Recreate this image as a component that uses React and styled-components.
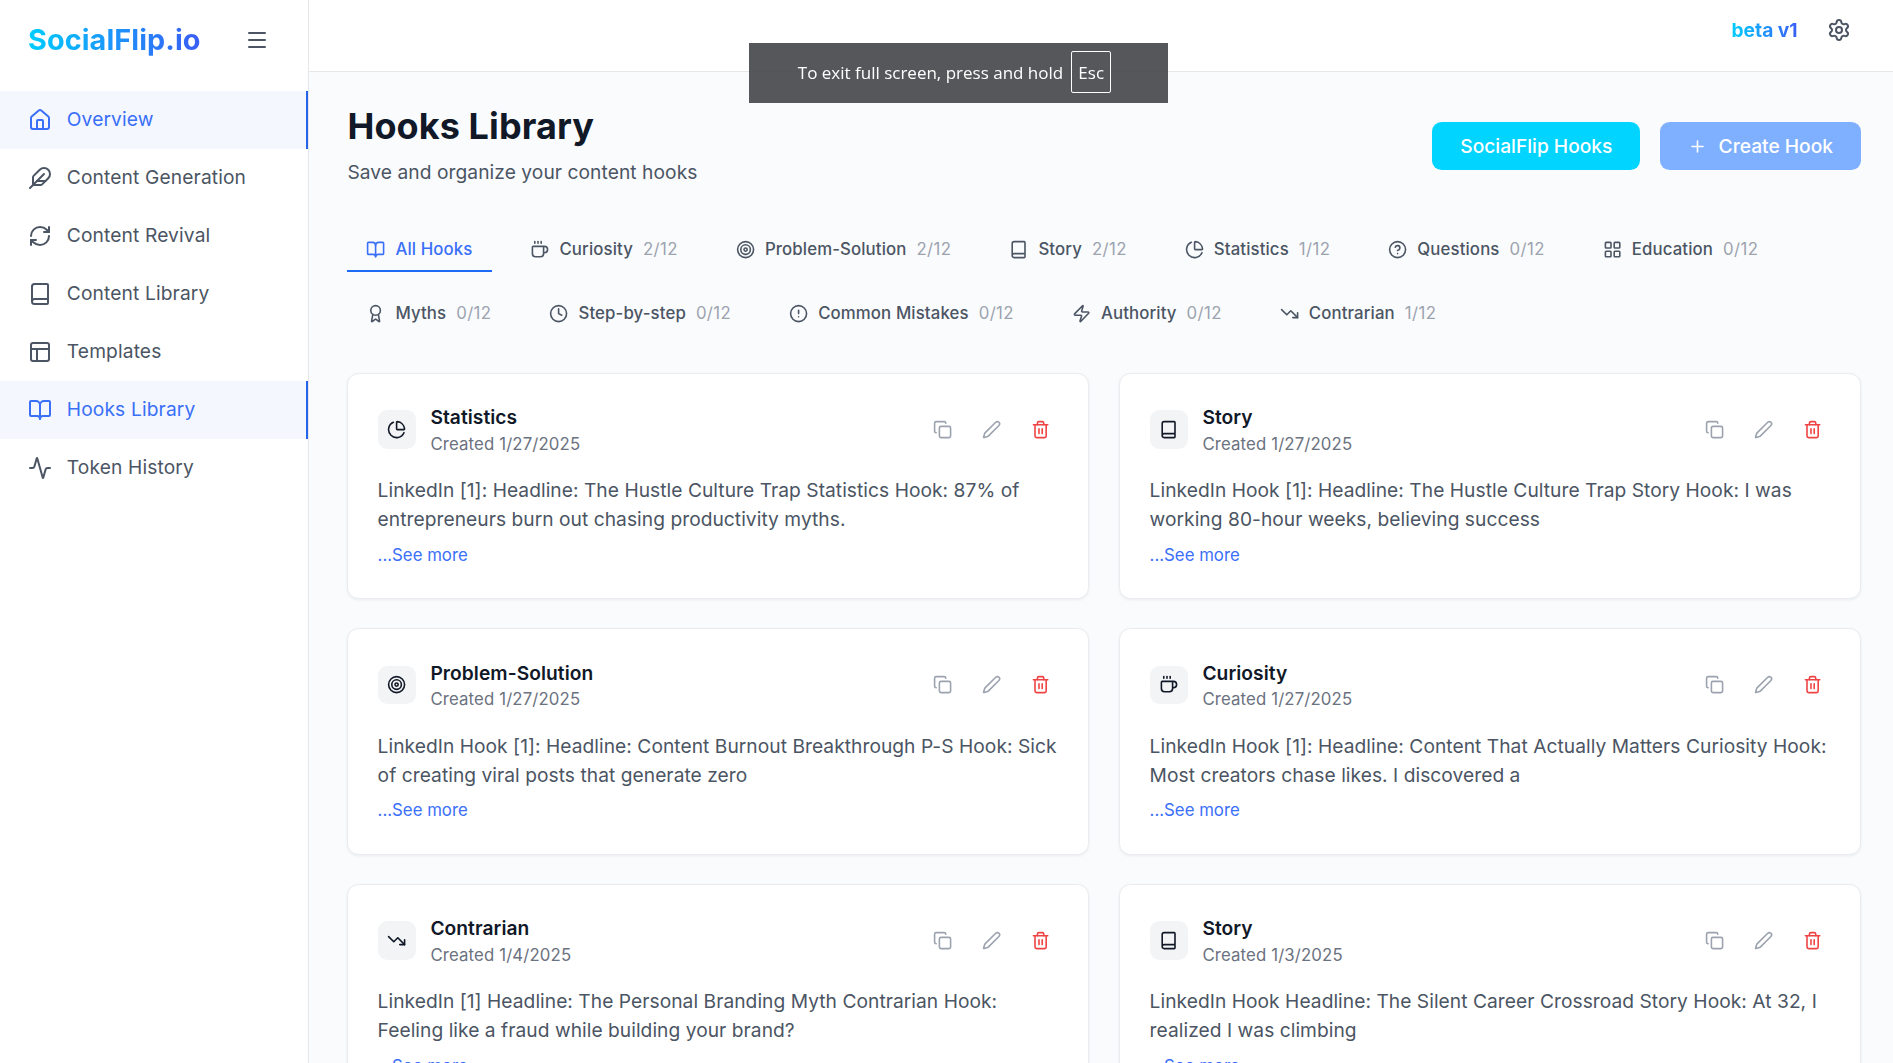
import React from 'react'
import styled, { createGlobalStyle } from 'styled-components'
import {
  Activity,
  Award,
  Book,
  BookOpen,
  ChartPie,
  CircleAlert,
  CircleHelp,
  Clock,
  Coffee,
  Copy,
  Feather,
  House,
  LayoutGrid,
  Menu,
  PanelsTopLeft,
  Pen,
  Plus,
  RefreshCw,
  Settings,
  Target,
  Trash2,
  TrendingDown,
  Zap,
} from 'lucide-react'

const navItems = [
  { label: 'Overview', icon: House, active: true },
  { label: 'Content Generation', icon: Feather },
  { label: 'Content Revival', icon: RefreshCw },
  { label: 'Content Library', icon: Book },
  { label: 'Templates', icon: PanelsTopLeft },
  { label: 'Hooks Library', icon: BookOpen, active: true },
  { label: 'Token History', icon: Activity },
]

const tabs = [
  { label: 'All Hooks', icon: BookOpen, active: true },
  { label: 'Curiosity', icon: Coffee, count: '2/12' },
  { label: 'Problem-Solution', icon: Target, count: '2/12' },
  { label: 'Story', icon: Book, count: '2/12' },
  { label: 'Statistics', icon: ChartPie, count: '1/12' },
  { label: 'Questions', icon: CircleHelp, count: '0/12' },
  { label: 'Education', icon: LayoutGrid, count: '0/12' },
  { label: 'Myths', icon: Award, count: '0/12' },
  { label: 'Step-by-step', icon: Clock, count: '0/12' },
  { label: 'Common Mistakes', icon: CircleAlert, count: '0/12' },
  { label: 'Authority', icon: Zap, count: '0/12' },
  { label: 'Contrarian', icon: TrendingDown, count: '1/12' },
]

const hooks = [
  {
    title: 'Statistics',
    icon: ChartPie,
    date: '1/27/2025',
    text: 'LinkedIn [1]: Headline: The Hustle Culture Trap Statistics Hook: 87% of entrepreneurs burn out chasing productivity myths.',
  },
  {
    title: 'Story',
    icon: Book,
    date: '1/27/2025',
    text: 'LinkedIn Hook [1]: Headline: The Hustle Culture Trap Story Hook: I was working 80-hour weeks, believing success',
  },
  {
    title: 'Problem-Solution',
    icon: Target,
    date: '1/27/2025',
    text: 'LinkedIn Hook [1]: Headline: Content Burnout Breakthrough P-S Hook: Sick of creating viral posts that generate zero',
  },
  {
    title: 'Curiosity',
    icon: Coffee,
    date: '1/27/2025',
    text: 'LinkedIn Hook [1]: Headline: Content That Actually Matters Curiosity Hook: Most creators chase likes. I discovered a',
  },
  {
    title: 'Contrarian',
    icon: TrendingDown,
    date: '1/4/2025',
    text: 'LinkedIn [1] Headline: The Personal Branding Myth Contrarian Hook: Feeling like a fraud while building your brand?',
  },
  {
    title: 'Story',
    icon: Book,
    date: '1/3/2025',
    text: 'LinkedIn Hook Headline: The Silent Career Crossroad Story Hook: At 32, I realized I was climbing',
  },
]

function App() {
  return (
    <Shell>
      <GlobalStyle />
      <Sidebar>
        <Brand>
          <Logo>SocialFlip.io</Logo>
          <MenuButton>
            <Menu size={24} />
          </MenuButton>
        </Brand>
        <nav>
          {navItems.map((item) => (
            <NavItem key={item.label} $active={item.active}>
              <item.icon size={24} />
              <span>{item.label}</span>
            </NavItem>
          ))}
        </nav>
      </Sidebar>

      <Body>
        <TopBar>
          <Beta>beta v1</Beta>
          <Settings size={24} color='#4b5563' />
        </TopBar>

        <Content>
          <PageHead>
            <div>
              <Title>Hooks Library</Title>
              <Subtitle>Save and organize your content hooks</Subtitle>
            </div>
            <HeadActions>
              <CyanButton>SocialFlip Hooks</CyanButton>
              <CreateButton>
                <Plus size={19} />
                Create Hook
              </CreateButton>
            </HeadActions>
          </PageHead>

          <Tabs>
            {tabs.map((tab) => (
              <Tab key={tab.label} $active={tab.active}>
                <tab.icon size={19.2} />
                <span>{tab.label}</span>
                {tab.count && <Count>{tab.count}</Count>}
              </Tab>
            ))}
          </Tabs>

          <CardGrid>
            {hooks.map((hook, index) => (
              <Card key={index}>
                <CardHead>
                  <IconBox>
                    <hook.icon size={19.2} />
                  </IconBox>
                  <CardInfo>
                    <CardTitle>{hook.title}</CardTitle>
                    <CardDate>Created {hook.date}</CardDate>
                  </CardInfo>
                  <CardActions>
                    <ActionButton>
                      <Copy size={19.2} />
                    </ActionButton>
                    <ActionButton>
                      <Pen size={19.2} />
                    </ActionButton>
                    <ActionButton $danger>
                      <Trash2 size={19.2} />
                    </ActionButton>
                  </CardActions>
                </CardHead>
                <CardText>{hook.text}</CardText>
                <SeeMore>...See more</SeeMore>
              </Card>
            ))}
          </CardGrid>
        </Content>
      </Body>

      <FullscreenNotice>
        To exit full screen, press and hold <EscKey>Esc</EscKey>
      </FullscreenNotice>
    </Shell>
  )
}

const GlobalStyle = createGlobalStyle`
  html, body {
    margin: 0;
    height: 100%;
    overflow: hidden;
    font-family: Inter, "Liberation Sans", sans-serif;
  }
  * {
    box-sizing: border-box;
  }
`

const Shell = styled.div`
  display: flex;
  height: 100vh;
  overflow: hidden;
  background: #fafbfd;
`

const Sidebar = styled.aside`
  flex: 0 0 309px;
  background: #fff;
  border-right: 1px solid #e5e7eb;
`

const Brand = styled.div`
  display: flex;
  align-items: center;
  justify-content: space-between;
  height: 91px;
  padding: 0 39px 12px 28px;
`

const Logo = styled.div`
  font-size: 28.8px;
  font-weight: 700;
  letter-spacing: 0.08px;
  background: linear-gradient(90deg, #00ccff, #3a5cf5);
  -webkit-background-clip: text;
  background-clip: text;
  color: transparent;
`

const MenuButton = styled.div`
  display: flex;
  color: #4b5563;
`

const NavItem = styled.div`
  display: flex;
  align-items: center;
  gap: 14.8px;
  height: 58px;
  padding-left: 28px;
  font-size: 19.2px;
  letter-spacing: 0.13px;
  color: ${(p) => (p.$active ? '#3a6ff7' : '#4b5563')};
  background: ${(p) => (p.$active ? '#f4f7fe' : 'transparent')};
  border-right: 2.4px solid ${(p) => (p.$active ? '#2563eb' : 'transparent')};

  span {
    margin-top: -1.5px;
  }
`

const Body = styled.div`
  flex: 1;
  min-width: 0;
  display: flex;
  flex-direction: column;
`

const TopBar = styled.header`
  flex: 0 0 72px;
  display: flex;
  justify-content: flex-end;
  align-items: flex-start;
  gap: 29.4px;
  padding: 18px 42px 0 0;
  background: #fff;
  border-bottom: 1px solid #e5e7eb;
`

const Beta = styled.div`
  font-size: 19.2px;
  line-height: 25px;
  font-weight: 700;
  background: linear-gradient(90deg, #00ccff, #3a5cf5);
  -webkit-background-clip: text;
  background-clip: text;
  color: transparent;
`

const Content = styled.main`
  flex: 1;
  min-height: 0;
  padding: 30px 32px 0 38.4px;
`

const PageHead = styled.div`
  display: flex;
  align-items: center;
  justify-content: space-between;
`

const Title = styled.h1`
  margin: 0;
  font-size: 36px;
  line-height: 48px;
  font-weight: 700;
  letter-spacing: 0.1px;
  color: #111827;
`

const Subtitle = styled.p`
  margin: 8px 0 0;
  font-size: 19.2px;
  line-height: 28.8px;
  letter-spacing: 0.06px;
  color: #4b5563;
`

const HeadActions = styled.div`
  display: flex;
  gap: 19.2px;
  margin-top: 4px;
`

const CyanButton = styled.button`
  display: flex;
  align-items: center;
  justify-content: center;
  gap: 12px;
  height: 48px;
  padding: 0 28px;
  border: 0;
  border-radius: 9.6px;
  font-family: inherit;
  font-size: 19.2px;
  font-weight: 500;
  color: #fff;
  background: #00d4ff;
`

const CreateButton = styled(CyanButton)`
  background: #7fb0ff;
`

const Tabs = styled.div`
  display: flex;
  flex-wrap: wrap;
  gap: 16px 19.4px;
  margin-top: 37.5px;
  margin-left: -0.4px;
`

const Tab = styled.div`
  display: flex;
  align-items: center;
  gap: 10px;
  height: 48px;
  padding: 4px 19.2px 0;
  font-size: 16.8px;
  font-weight: 450;
  letter-spacing: 0.12px;
  color: ${(p) => (p.$active ? '#3a6ff7' : '#4b5563')};
  border-bottom: 2.4px solid ${(p) => (p.$active ? '#1d6bf5' : 'transparent')};
`

const Count = styled.span`
  font-weight: 400;
  letter-spacing: 0.4px;
  color: #9ca3af;
`

const CardGrid = styled.div`
  display: grid;
  grid-template-columns: repeat(2, 1fr);
  gap: 29px 30px;
  margin-top: 36.5px;
  margin-left: -0.4px;
`

const Card = styled.article`
  padding: 29.4px 29.6px 31.4px;
  background: #fff;
  border: 1px solid #e9ebef;
  border-radius: 11.5px;
  box-shadow: 0 1px 3px rgba(0, 0, 0, 0.06);
`

const CardHead = styled.div`
  display: flex;
  align-items: center;
  gap: 14.4px;
`

const IconBox = styled.div`
  flex: 0 0 38.4px;
  height: 38.4px;
  display: flex;
  align-items: center;
  justify-content: center;
  border-radius: 9.6px;
  background: #f3f4f6;
  color: #111827;
`

const CardInfo = styled.div`
  flex: 1;
  min-width: 0;
`

const CardTitle = styled.div`
  font-size: 19.2px;
  line-height: 28.8px;
  font-weight: 600;
  letter-spacing: 0.06px;
  color: #111827;
`

const CardDate = styled.div`
  font-size: 16.8px;
  line-height: 24px;
  letter-spacing: 0.13px;
  color: #6b7280;
`

const CardActions = styled.div`
  display: flex;
  gap: 10.5px;
  margin-right: -1.4px;
`

const ActionButton = styled.div`
  display: flex;
  padding: 9.6px;
  color: ${(p) => (p.$danger ? '#ef4444' : '#9ca3af')};
`

const CardText = styled.p`
  margin: 20.4px 0 0;
  font-size: 19.2px;
  line-height: 28.8px;
  letter-spacing: 0.04px;
  color: #4b5563;
`

const SeeMore = styled.div`
  margin-top: 8.9px;
  font-size: 16.8px;
  line-height: 24px;
  color: #3a6ff7;
`

const FullscreenNotice = styled.div`
  position: fixed;
  left: 749px;
  top: 43px;
  width: 419px;
  height: 60px;
  display: flex;
  align-items: center;
  justify-content: center;
  gap: 8px;
  padding: 0 8px 2px 0;
  background: rgba(72, 74, 78, 0.93);
  font-family: "Open Sans", sans-serif;
  font-size: 17px;
  color: #fff;
`

const EscKey = styled.span`
  display: flex;
  align-items: center;
  justify-content: center;
  width: 40px;
  height: 42px;
  border: 1px solid #fff;
  border-radius: 2px;
`

export default App
